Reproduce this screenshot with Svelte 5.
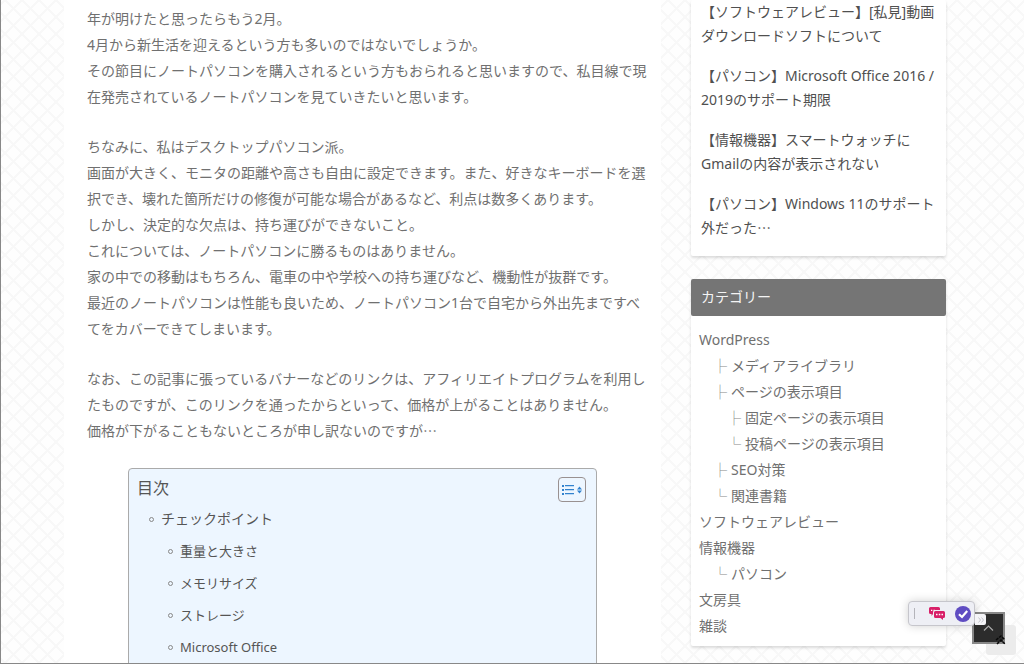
<script>
  const paragraphs = [
    [
      '年が明けたと思ったらもう2月。',
      '4月から新生活を迎えるという方も多いのではないでしょうか。',
      'その節目にノートパソコンを購入されるという方もおられると思いますので、私目線で現在発売されているノートパソコンを見ていきたいと思います。'
    ],
    [
      'ちなみに、私はデスクトップパソコン派。',
      '画面が大きく、モニタの距離や高さも自由に設定できます。また、好きなキーボードを選択でき、壊れた箇所だけの修復が可能な場合があるなど、利点は数多くあります。',
      'しかし、決定的な欠点は、持ち運びができないこと。',
      'これについては、ノートパソコンに勝るものはありません。',
      '家の中での移動はもちろん、電車の中や学校への持ち運びなど、機動性が抜群です。',
      '最近のノートパソコンは性能も良いため、ノートパソコン1台で自宅から外出先まですべてをカバーできてしまいます。'
    ],
    [
      'なお、この記事に張っているバナーなどのリンクは、アフィリエイトプログラムを利用したものですが、このリンクを通ったからといって、価格が上がることはありません。',
      '価格が下がることもないところが申し訳ないのですが…'
    ]
  ];

  const toc = ['重量と大きさ', 'メモリサイズ', 'ストレージ', 'Microsoft Office'];

  const recentPosts = [
    '【ソフトウェアレビュー】[私見]動画ダウンロードソフトについて',
    '【パソコン】Microsoft Office 2016 / 2019のサポート期限',
    '【情報機器】スマートウォッチにGmailの内容が表示されない',
    '【パソコン】Windows 11のサポート外だった…'
  ];

  const categories = [
    {
      name: 'WordPress',
      children: [
        { name: 'メディアライブラリ' },
        {
          name: 'ページの表示項目',
          children: [{ name: '固定ページの表示項目' }, { name: '投稿ページの表示項目' }]
        },
        { name: 'SEO対策' },
        { name: '関連書籍' }
      ]
    },
    { name: 'ソフトウェアレビュー' },
    { name: '情報機器', children: [{ name: 'パソコン' }] },
    { name: '文房具' },
    { name: '雑談' }
  ];
</script>

<!-- The last word keeps the Japanese font so that its ellipsis sits mid-line -->
{#snippet ja(text)}{#if text.endsWith('…')}{text.slice(0, -5)}<span class="dots">{text.slice(-5)}</span>{:else}{text}{/if}{/snippet}

{#snippet tree(items, depth)}
  <ul class:nested={depth > 0}>
    {#each items as item, i}
      <li>
        {#if depth > 0}<span class="branch">{i === items.length - 1 ? '└' : '├'}</span>{/if}<a href="#category">{item.name}</a>
        {#if item.children}
          {@render tree(item.children, depth + 1)}
        {/if}
      </li>
    {/each}
  </ul>
{/snippet}

<div class="page">
  <main class="article">
    {#each paragraphs as lines}
      <p>
        {#each lines as line, i}{#if i > 0}<br />{/if}{@render ja(line)}{/each}
      </p>
    {/each}

    <nav class="toc" aria-label="目次">
      <div class="toc-head">
        <span class="toc-title">目次</span>
        <button class="toc-toggle" aria-label="目次の表示切り替え">
          <svg width="20" height="10" viewBox="0 0 20 10" fill="#3182ce">
            <path d="M0 0h2v2H0zM3 0h9v1.300H3zM0 4h2v2H0zM3 4h9v1.300H3zM0 8h2v2H0zM3 8h9v1.300H3z" />
            <path d="M17.500 1.500l2.500 3h-5zM17.500 8.500l2.500-3h-5z" />
          </svg>
        </button>
      </div>
      <ul>
        <li>
          <a href="#checkpoint">チェックポイント</a>
          <ul class="toc-sub">
            {#each toc as entry}
              <li><a href="#entry">{entry}</a></li>
            {/each}
          </ul>
        </li>
      </ul>
    </nav>
  </main>

  <aside class="sidebar">
    <section class="card recent">
      <ul>
        {#each recentPosts as post}
          <li><a href="#post">{@render ja(post)}</a></li>
        {/each}
      </ul>
    </section>

    <section class="card">
      <h3>カテゴリー</h3>
      <div class="categories">
        {@render tree(categories, 0)}
      </div>
    </section>
  </aside>
</div>

<!-- Floating controls in the bottom right corner -->
<button class="scroll-top" aria-label="トップへ"></button>
<button class="to-top" aria-label="ページの先頭へ">
  <svg width="29" height="28" viewBox="0 0 29 28" fill="none">
    <path d="M10 16.500l4.500-4.500 4.500 4.500" stroke="#aaa" stroke-width="1.200" />
    <path d="M22 26l5-4 4 4M23 30l4-4 4 4" stroke="#080808" stroke-width="1.500" stroke-dasharray="3 1" />
  </svg>
</button>
<div class="toolbar">
  <span class="grip"></span>
  <button class="chat" aria-label="チャット">
    <svg width="17" height="14" viewBox="0 0 17 14" fill="#d81f68">
      <path d="M1.5 0h8a1.5 1.5 0 0 1 1.500 1.500V3H6.500A2.500 2.500 0 0 0 4 5.500V7L2.500 9V7h-1A1.500 1.500 0 0 1 0 5.500v-4A1.500 1.500 0 0 1 1.500 0z" />
      <path d="M6.500 4h8A1.500 1.500 0 0 1 16 5.500v4a1.500 1.500 0 0 1-1.500 1.500H14v2L11.500 11h-5A1.500 1.500 0 0 1 5 9.500v-4A1.500 1.500 0 0 1 6.500 4z" />
      <path d="M7 6.800h1.500v1.400H7zM9.800 6.800h1.500v1.400H9.800zM12.500 6.800H14v1.400h-1.500zM2 2.800h1.300V4H2zM4.500 2.800h1.300V4H4.500z" fill="#fff" />
    </svg>
  </button>
  <button class="check" aria-label="チェック">
    <svg width="16" height="16" viewBox="0 0 16 16" fill="none">
      <circle cx="8" cy="8" r="8" fill="#5f4cc2" />
      <path d="M4 8.200l3 2.800 5.200-6" stroke="#fff" stroke-width="2.200" />
    </svg>
  </button>
</div>
<button class="expand" aria-label="展開">
  <svg width="6" height="6" viewBox="0 0 6 6" fill="none" stroke="#c4c4cc">
    <path d="M.5.5L2.500 3 .5 5.500M3.500.5L5.500 3l-2 2.500" />
  </svg>
</button>

<style>
  :global(body) {
    background: #fefefe;
    color: #707070;
    font-family: "Noto Sans", "Noto Sans CJK JP", sans-serif;
    font-size: 14px;
    font-weight: 400;
    line-height: 26px;
  }

  .page {
    display: grid;
    grid-template-columns: 1fr 255px;
    align-items: start;
    gap: 30px;
    box-sizing: border-box;
    height: 100vh;
    padding: 0 78px 0 63px;
    border-left: 1px solid #888;
    border-bottom: 1px solid #888;
    overflow: hidden;
    background:
      linear-gradient(45deg, transparent 46%, #f8f8f8 46% 54%, transparent 54%) 4px 0 / 17px 17px,
      linear-gradient(-45deg, transparent 46%, #f8f8f8 46% 54%, transparent 54%) 4px 0 / 17px 17px,
      #fefefe;
  }

  a {
    color: inherit;
    text-decoration: none;
  }

  ul {
    margin: 0;
    padding: 0;
    list-style: none;
  }

  button {
    padding: 0;
    border: 0;
    background: none;
    cursor: pointer;
  }

  svg {
    display: block;
    overflow: visible;
  }

  .dots {
    font-family: "Noto Sans CJK JP", sans-serif;
    line-height: 1;
  }

  /* Article */
  .article {
    min-width: 0;
    padding: 6px 14px 0 23px;
    background: #fff;
  }

  p {
    margin: 0 0 24px;
  }

  .toc {
    margin: 0 50px 0 41px;
    padding: 8px 10px 24px 8px;
    border: 1px solid #aaa;
    border-radius: 4px;
    background: #edf6ff;
    color: #555;
  }

  .toc-head {
    display: flex;
    justify-content: space-between;
    align-items: flex-start;
    padding-bottom: 1px;
  }

  .toc-title {
    font-size: 16px;
    line-height: 22px;
  }

  .toc-toggle {
    display: flex;
    align-items: center;
    justify-content: center;
    box-sizing: border-box;
    width: 28px;
    height: 25px;
    border: 1px solid #999191;
    border-radius: 4px;
  }

  .toc li {
    padding-left: 24px;
    line-height: 32px;
  }

  .toc a::before {
    content: "";
    display: inline-block;
    box-sizing: border-box;
    width: 5px;
    height: 5px;
    margin: 0 7px 2px -12px;
    border: 1px solid #888;
    border-radius: 50%;
  }

  .toc-sub li {
    padding-left: 19px;
    font-size: 13px;
  }

  /* Sidebar */
  .sidebar {
    display: flex;
    flex-direction: column;
    gap: 23px;
  }

  .card {
    border-radius: 2px;
    background: #fff;
    box-shadow: 0 2px 3px rgba(0, 0, 0, 0.14);
  }

  .recent {
    padding: 0 10px 16px;
    color: #505050;
    line-height: 24px;
  }

  .recent li + li {
    margin-top: 16px;
  }

  h3 {
    margin: 0;
    padding: 5px 10px 6px;
    border-radius: 2px;
    background: #757575;
    color: #f4f4f4;
    font-size: 14px;
    font-weight: 400;
  }

  .categories {
    padding: 11px 8px 7px;
  }

  .nested {
    padding-left: 14px;
  }

  .branch {
    margin-right: 4px;
    color: #888;
  }

  /* Floating controls */
  .scroll-top {
    position: fixed;
    right: 8px;
    bottom: 9px;
    width: 30px;
    height: 30px;
    border-radius: 3px;
    background: #ececec;
  }

  .to-top {
    position: fixed;
    right: 19px;
    bottom: 20px;
    box-sizing: border-box;
    width: 33px;
    height: 32px;
    border: 2px solid #888;
    background: #2c2c2c;
  }

  .toolbar {
    position: fixed;
    right: 49px;
    bottom: 38px;
    display: flex;
    align-items: center;
    box-sizing: border-box;
    width: 67px;
    height: 25px;
    padding: 0 3px 0 5px;
    border: 1px solid #c6c6cc;
    border-radius: 4px;
    background: #eeeff5;
    box-shadow: 0 0 10px rgba(0, 0, 0, 0.18);
  }

  .grip {
    width: 1px;
    height: 11px;
    background: #b4b4ba;
  }

  .chat {
    margin: 0 auto 0 14px;
  }

  .expand {
    position: fixed;
    right: 38px;
    bottom: 39px;
    display: flex;
    align-items: center;
    justify-content: center;
    width: 11px;
    height: 11px;
    border-radius: 0 2px 2px 0;
    background: #f4f4f7;
  }
</style>
